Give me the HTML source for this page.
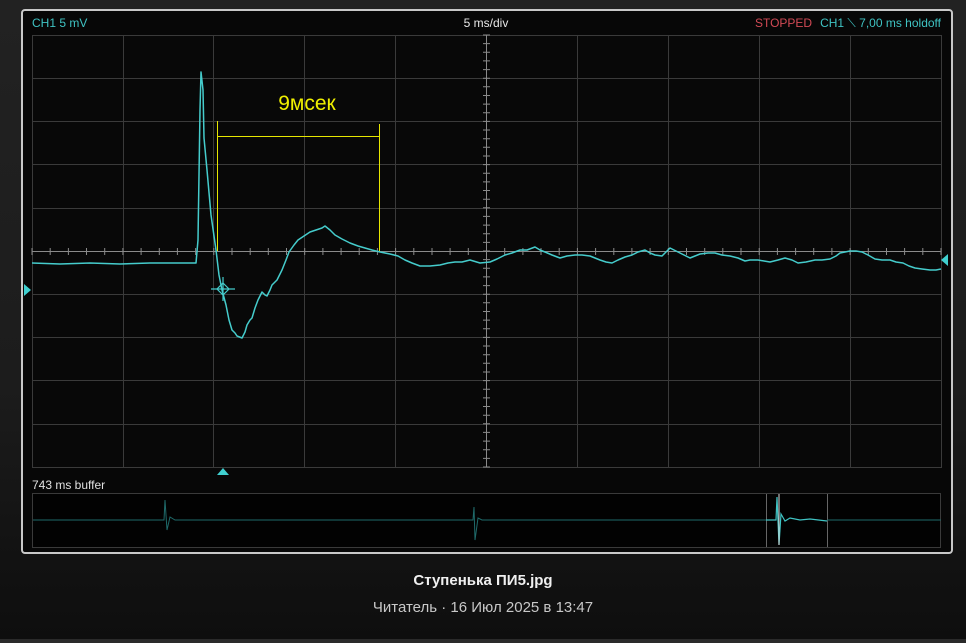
<!DOCTYPE html>
<html><head><meta charset="utf-8"><style>
html,body{margin:0;padding:0;}
body{width:966px;height:643px;overflow:hidden;background:linear-gradient(#222 0,#1c1c1c 60%,#111 90%,#0e0e0e 100%);position:relative;font-family:"Liberation Sans","DejaVu Sans",sans-serif;}
.frame{position:absolute;left:21px;top:9px;width:928px;height:541px;border:2px solid #c8c8c8;border-radius:4px;background:#070707;}
.cap1{position:absolute;left:0;width:966px;top:572px;text-align:center;color:#f0f0f0;font-weight:bold;font-size:15px;font-family:"Liberation Sans Narrow","Liberation Sans",sans-serif;}
.cap2{position:absolute;left:0;width:966px;top:599px;text-align:center;color:#c8c8c8;font-size:15px;font-family:"Liberation Sans Narrow","Liberation Sans",sans-serif;}
.strip{position:absolute;left:0;top:639px;width:966px;height:4px;background:#2a2a2a;}
</style></head><body>
<div class="frame"></div>
<svg width="966" height="643" style="position:absolute;left:0;top:0">
<g font-family="Liberation Sans Narrow, Liberation Sans, sans-serif" font-size="12">
<text x="32" y="27" fill="#3fc3c3">CH1 5 mV</text>
<text x="486" y="27" fill="#e8e8e8" text-anchor="middle">5 ms/div</text>
<text x="941" y="27" text-anchor="end"><tspan fill="#d24a55">STOPPED</tspan><tspan fill="#3fc3c3" dx="8">CH1 ⟍ 7,00 ms holdoff</tspan></text>
<text x="32" y="489" fill="#e0e0e0">743 ms buffer</text>
</g>
<g stroke="#3a3a3a" stroke-width="1">
<rect x="32.5" y="35.5" width="909" height="432" fill="#080808"/>
<path d="M123.5 35V467M213.5 35V467M304.5 35V467M395.5 35V467M577.5 35V467M668.5 35V467M759.5 35V467M850.5 35V467M32 78.5H941M32 121.5H941M32 164.5H941M32 208.5H941M32 294.5H941M32 337.5H941M32 380.5H941M32 424.5H941"/>
</g>
<g stroke="#8a8a8a" stroke-width="1">
<path d="M32 251.5H941M486.5 35V467"/>
</g>
<g stroke="#8a8a8a" stroke-width="1" id="ticks"></g>
<g stroke="#e6e600" stroke-width="1" fill="none">
<path d="M217.5 121V251M379.5 124V251M217 136.5H380"/>
</g>
<text x="307" y="110" fill="#f0f000" font-size="21" text-anchor="middle" font-family="Liberation Sans, sans-serif">9мсек</text>
<polyline fill="none" stroke="#45cccc" stroke-width="1.5" stroke-linejoin="round" points="32,263 60,264 90,263 120,264 150,263 180,263 196,263 198,240 200,110 201,72 203,90 204,138 207,170 211,215 216,250 219,275 222,290 226,305 229,320 232,330 235,333 237,336 242,338 245,332 247,325 250,320 252,318 255,308 258,300 262,292 265,295 267,296 270,290 272,285 277,280 282,270 286,260 289,252 294,245 298,240 304,236 310,232 316,230 322,228 325,226 330,230 335,235 342,239 350,243 358,246 365,248 372,250 380,252 390,254 398,256 405,260 412,263 420,266 430,266 440,265 448,263 455,262 462,262 470,260 480,263 490,262 497,259 505,255 512,253 520,250 527,250 535,247 540,250 545,252 552,255 560,258 567,256 575,255 582,255 590,256 595,258 600,260 606,262 612,263 618,260 625,257 632,255 638,252 645,250 650,253 655,255 662,256 666,252 670,248 674,250 678,252 684,255 690,258 695,256 700,254 708,253 715,253 722,255 730,256 738,258 745,261 750,260 758,260 764,261 770,262 778,260 785,258 792,260 798,263 806,262 815,260 822,260 830,259 836,256 840,253 845,252 850,251 856,251 862,252 868,255 875,259 882,260 890,260 896,262 903,263 909,266 915,268 922,269 930,270 936,270 941,269"/>
<g stroke="#45cccc" stroke-width="1.2" fill="none"><path d="M211 289H235M223 277V301"/><path d="M223 283L229 289L223 295L217 289Z"/></g>
<path d="M24 284L31 290L24 296Z" fill="#40d0d0"/>
<path d="M948 254L941 260L948 266Z" fill="#40d0d0"/>
<path d="M217 475L223 468L229 475Z" fill="#40d0d0"/>
<rect x="32.5" y="493.5" width="908" height="54" fill="#020202" stroke="#3a3a3a"/>
<path d="M766.5 494V547M827.5 494V547" stroke="#666"/>
<polyline fill="none" stroke="#1f6a6a" stroke-width="1" points="33,520 160,520 164,520 165,500 167,530 170,517 175,520 470,520 473,520 474,507 475,540 478,518 482,520 766,520"/>
<polyline fill="none" stroke="#3fc3c3" stroke-width="1.2" points="766,520 776,520 777,497 779,545 781,514 785,521 790,518 800,520 810,519 827,521"/>
<polyline fill="none" stroke="#1f6a6a" stroke-width="1" points="827,520 941,520"/>
<path d="M779 494V545" stroke="#ddd" stroke-width="1"/>
</svg>
<div class="cap1">Ступенька ПИ5.jpg</div>
<div class="cap2">Читатель · 16 Июл 2025 в 13:47</div>
<div class="strip"></div>
<script>
var g=document.getElementById('ticks'),s='';
for(var i=0;i<=50;i++){var x=32+i*909/50;s+='M'+x.toFixed(1)+' 248V255';}
for(var j=0;j<=50;j++){var y=35+j*432/50;s+='M483 '+y.toFixed(1)+'H490';}
g.innerHTML='<path d="'+s+'"/>';
</script>
</body></html>
